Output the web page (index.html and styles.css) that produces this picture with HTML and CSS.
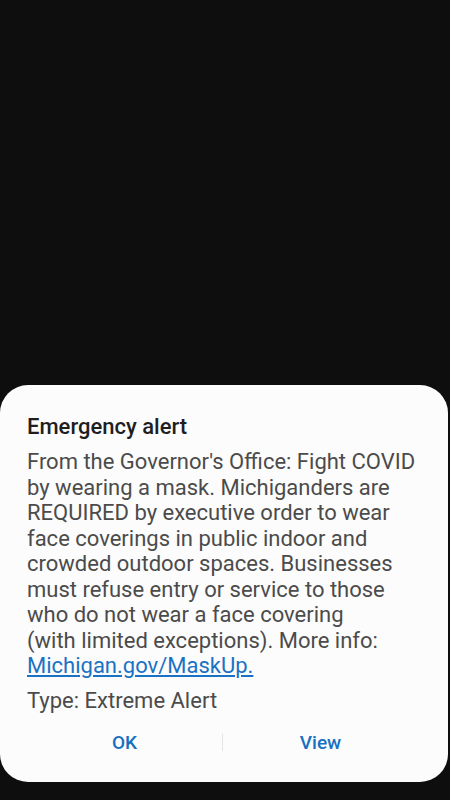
FILE: index.html
```html
<!DOCTYPE html>
<html>
<head>
<meta charset="utf-8">
<link rel="stylesheet" href="styles.css">
</head>
<body>
<div class="screen">
  <div class="dialog">
    <div class="title">Emergency alert</div>
    <div class="body">From the Governor's Office: Fight COVID<br>by wearing a mask. Michiganders are<br>REQUIRED by executive order to wear<br>face coverings in public indoor and<br>crowded outdoor spaces. Businesses<br>must refuse entry or service to those<br>who do not wear a face covering<br>(with limited exceptions). More info:<br><a class="link" href="#">Michigan.gov/MaskUp.</a></div>
    <div class="type">Type: Extreme Alert</div>
    <div class="actions">
      <div class="btn">OK</div>
      <div class="sep"></div>
      <div class="btn">View</div>
    </div>
  </div>
</div>
</body>
</html>
```
FILE: styles.css
```css
html, body {
  margin: 0;
  padding: 0;
  background: #0e0e0e;
}
.screen {
  width: 450px;
  height: 800px;
  display: flex;
  flex-direction: column;
  justify-content: flex-end;
  padding-bottom: 18px;
  box-sizing: border-box;
}
.dialog {
  width: 448px;
  height: 397px;
  background: #fcfcfc;
  border-radius: 28px;
  padding: 29px 30px 0 27px;
  box-sizing: border-box;
  font-family: Roboto, "Liberation Sans", sans-serif;
}
.title {
  font-size: 22px;
  line-height: 26px;
  font-weight: 500;
  color: #1f1f1f;
}
.body {
  margin-top: 9px;
  font-size: 22px;
  line-height: 25.5px;
  color: #4b4b4b;
  white-space: nowrap;
}
.link {
  color: #1a72c4;
  text-decoration: underline;
}
.type {
  margin-top: 9.5px;
  font-size: 22px;
  line-height: 25.5px;
  color: #4b4b4b;
}
.actions {
  display: flex;
  align-items: center;
  margin-top: 13px;
  height: 32px;
}
.btn {
  flex: 1;
  text-align: center;
  font-size: 19px;
  font-weight: 500;
  color: #1670c2;
}
.sep {
  width: 1px;
  height: 17px;
  background: #e4e4e4;
}
```
